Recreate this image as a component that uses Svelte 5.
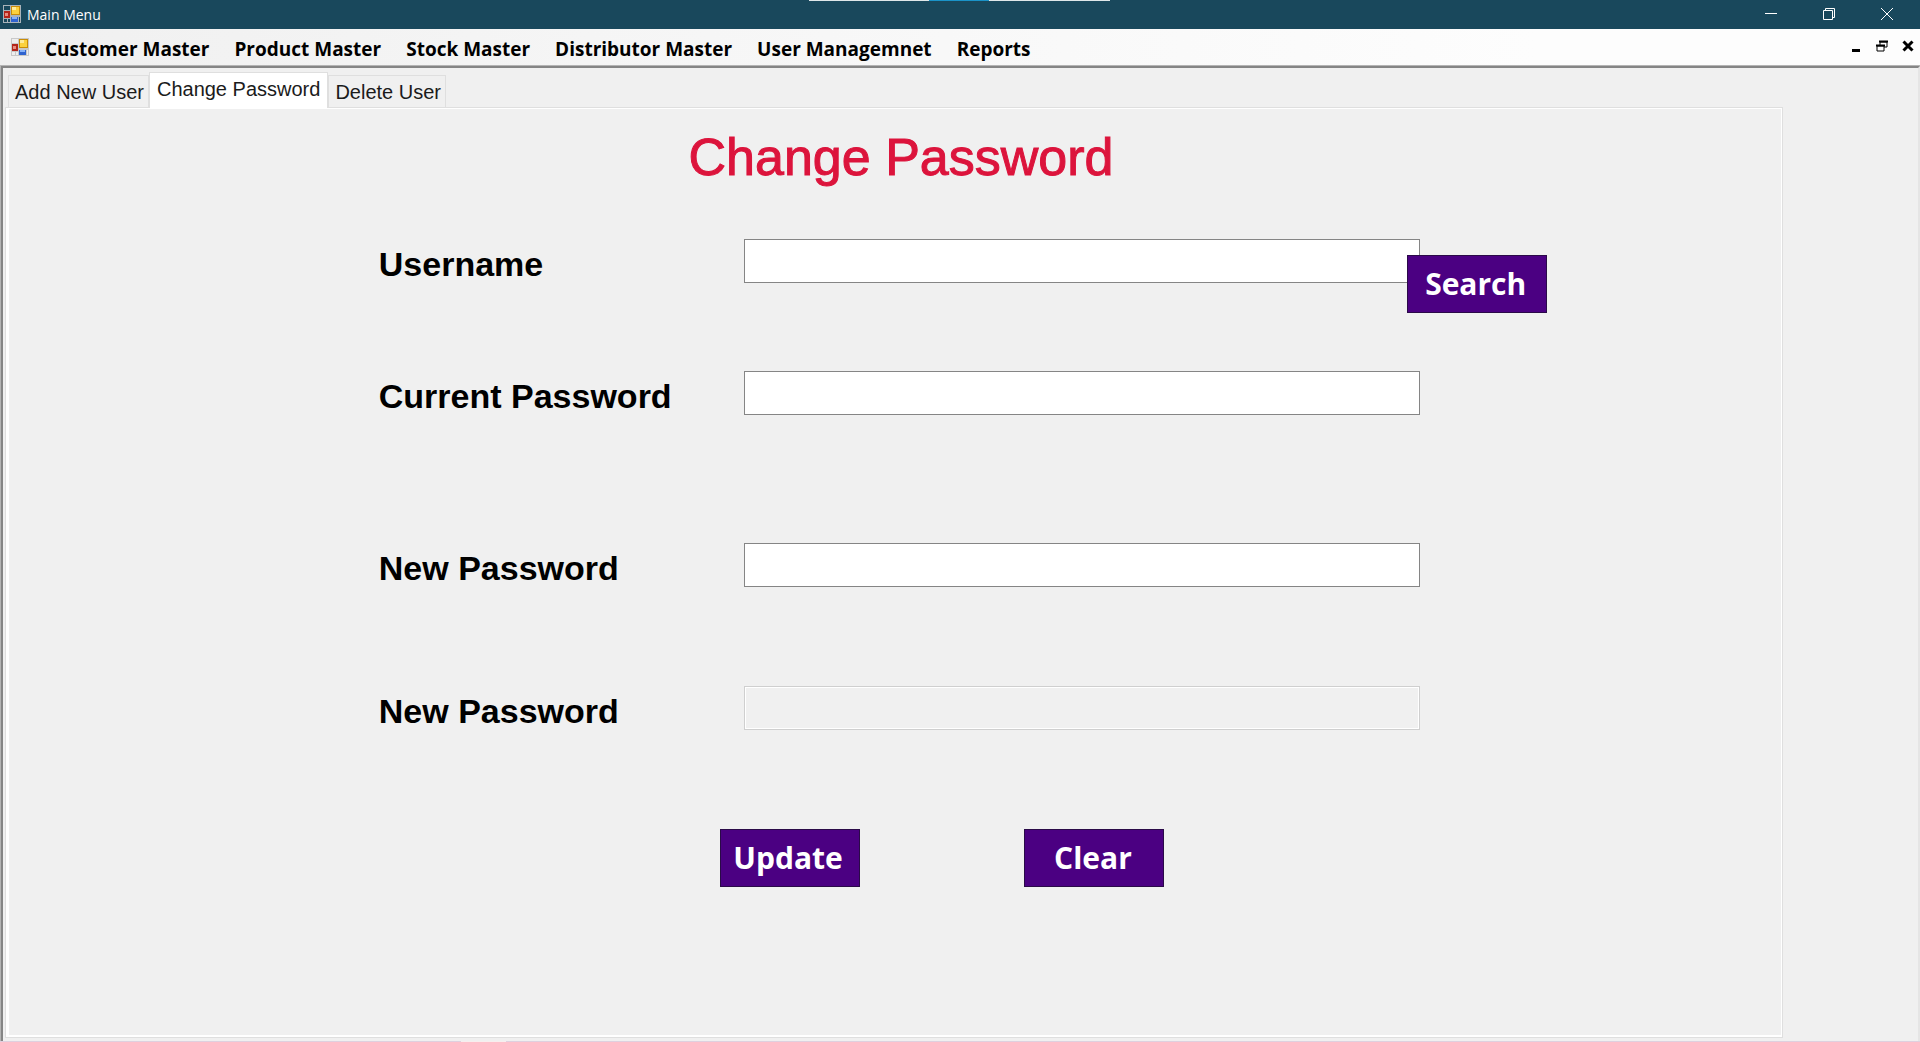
<script>
  const menus = ['Customer Master', 'Product Master', 'Stock Master', 'Distributor Master', 'User Managemnet', 'Reports'];
  const tabs = ['Add New User', 'Change Password', 'Delete User'];
  let active = $state('Change Password');
</script>

{#snippet appIcon()}
  <svg class="app-icon" viewBox="0 0 18 18" width="18" height="18" aria-hidden="true">
    <rect class="grid" x="0" y="0" width="18" height="18" />
    <rect class="cell" x="1" y="1" width="6" height="4" />
    <rect class="cell" x="1" y="14" width="3" height="3" />
    <rect class="cell" x="5" y="14" width="2" height="3" />
    <rect class="cell" x="16" y="12" width="1" height="5" />
    <rect x="1" y="6" width="6" height="7" fill="#b3261b" />
    <rect x="2" y="8" width="3" height="3" fill="#e88d80" />
    <rect x="8" y="1" width="9" height="9" fill="#c98d07" />
    <rect x="9" y="2" width="7" height="7" fill="#fbd13d" />
    <rect x="9" y="2" width="4" height="3" fill="#fdeb9a" />
    <rect x="8" y="12" width="7" height="5" fill="#2f63cf" />
    <rect x="9" y="12" width="5" height="2" fill="#86b2f8" />
  </svg>
{/snippet}

<div class="window">
  <header class="titlebar">
    {@render appIcon()}
    <span class="caption">Main Menu</span>
    <div class="handle" aria-hidden="true"><i></i></div>
    <div class="window-controls">
      <button aria-label="Minimize"><svg width="12" height="12" viewBox="0 0 12 12"><path d="M0 5.5H12" /></svg></button>
      <button aria-label="Restore"><svg width="12" height="12" viewBox="0 0 12 12"><path d="M.5 2.500H9.500V11.500H.5ZM2.500 2.500V.5H11.500V9.500H9.500" /></svg></button>
      <button aria-label="Close"><svg width="12" height="12" viewBox="0 0 12 12"><path d="M0 0L12 12M12 0L0 12" /></svg></button>
    </div>
  </header>

  <nav class="menubar">
    {@render appIcon()}
    <div class="menus">
      {#each menus as menu}
        <button class="menu">{menu}</button>
      {/each}
    </div>
    <div class="child-controls">
      <button aria-label="Minimize child"><svg width="12" height="12" viewBox="0 0 12 12"><path d="M2 10.500H10" stroke-width="3" /></svg></button>
      <button aria-label="Restore child"><svg width="12" height="12" viewBox="0 0 12 12"><path d="M1 6H8V11H1ZM4 5V2H11V7H8" stroke-width="1" /><path d="M3 1.500H12M0 5.500H9" stroke-width="2" /></svg></button>
      <button aria-label="Close child"><svg width="12" height="12" viewBox="0 0 12 12"><path d="M1.500 1.500L10.500 10.500M10.500 1.500L1.500 10.500" stroke-width="3" /></svg></button>
    </div>
  </nav>

  <main class="client">
    <div class="tabs" role="tablist">
      {#each tabs as tab}
        <button role="tab" class="tab" class:active={active === tab} aria-selected={active === tab} onclick={() => (active = tab)}>{tab}</button>
      {/each}
    </div>
    <section class="page">
      <h1>Change Password</h1>
      <form onsubmit={(e) => e.preventDefault()}>
        <div class="row">
          <label for="username">Username</label>
          <div class="field">
            <input id="username" type="text" />
            <button type="button" class="action search">Search</button>
          </div>
        </div>
        <div class="row current">
          <label for="current">Current Password</label>
          <div class="field"><input id="current" type="password" /></div>
        </div>
        <div class="row new">
          <label for="new">New Password</label>
          <div class="field"><input id="new" type="password" /></div>
        </div>
        <div class="row confirm">
          <label for="confirm">New Password</label>
          <div class="field"><input id="confirm" type="password" disabled /></div>
        </div>
        <div class="actions">
          <button type="submit" class="action">Update</button>
          <button type="reset" class="action clear">Clear</button>
        </div>
      </form>
    </section>
  </main>
  <div class="desktop-edge" aria-hidden="true"><i></i></div>
</div>

<style>
  :global(body) { margin: 0; background: #f0f0f0; }
  .window {
    display: flex;
    flex-direction: column;
    min-height: 100vh;
    background: #b4b4b4;
    font-family: "Liberation Sans", Arial, sans-serif;
    color: #000;
  }
  button { font: inherit; color: inherit; border: 0; padding: 0; background: none; }
  svg { display: block; flex: none; }

  .titlebar {
    position: relative;
    display: flex;
    align-items: center;
    box-sizing: border-box;
    height: 29px;
    padding: 0 4px 1px 3px;
    background: #19485c;
    color: #fff;
  }
  .titlebar .cell { fill: #19485c; }
  .grid { fill: #a9b3ba; }
  .menubar .grid { fill: #c8c8c8; }
  .caption { margin-left: 6px; padding-top: 2px; font: 14px/20px "Open Sans", sans-serif; }
  .handle {
    position: absolute;
    top: 0;
    left: 42.14%;
    width: 301px;
    height: 1px;
    background: #dfe7e9;
  }
  .handle i { display: block; width: 60px; height: 1px; margin-left: 120px; background: #1a93c8; }
  .window-controls { display: flex; margin-left: auto; height: 100%; }
  .window-controls button { display: grid; place-items: center; width: 58px; }
  .window-controls path { fill: none; stroke: #fff; stroke-width: 1; }

  .menubar {
    display: flex;
    align-items: center;
    height: 36px;
    padding: 0 6px 0 11px;
    background: linear-gradient(90deg, #f0f0f0, #fdfdfd 80%);
    font: bold 19px/26px "Open Sans", sans-serif;
  }
  .menubar .cell { fill: #eee; }
  .menus { display: flex; gap: 25px; padding: 3px 0 0 16px; }
  .menu { white-space: nowrap; }
  .child-controls { display: flex; gap: 14px; margin: 0 0 2px auto; }
  .child-controls path { fill: none; stroke: #000; }

  .client {
    flex: 1;
    display: flex;
    flex-direction: column;
    margin: 1px 0 0 1px;
    padding: 5px 135px 3px 2px;
    border-top: 2px solid #858585;
    border-left: 2px solid #858585;
    border-right: 2px solid #e5e5e5;
    background: #f0f0f0;
  }
  .tabs { display: flex; align-items: flex-end; height: 34px; padding-left: 3px; }
  .tab {
    height: 32px;
    padding: 0 4px 0 6px;
    border: 1px solid #dfdfdf;
    border-bottom: 0;
    font-size: 20px;
    line-height: 24px;
    color: #1b1b1b;
    white-space: nowrap;
  }
  .tab.active {
    z-index: 1;
    height: 36px;
    margin-bottom: -1px;
    padding: 0 7px 4px;
    background: #fff;
  }
  .page {
    flex: 1;
    border: 1px solid #dfdfdf;
    box-shadow: inset 3px 0 #fff, inset 0 1px #fff, inset -1px -2px #fff;
  }
  h1 {
    margin: 0;
    padding: 18px 0 0 14px;
    font-size: 52px;
    line-height: 62px;
    font-weight: 400;
    color: #dc143c;
    text-align: center;
    -webkit-text-stroke: 1px #dc143c;
  }
  form { padding-top: 51px; }
  .row { display: grid; grid-template-columns: 373fr 365fr 677fr 362fr; margin-bottom: 88px; }
  .row.current { margin-bottom: 128px; }
  .row.new, .row.confirm { margin-bottom: 99px; }
  label {
    grid-column: 2;
    padding-top: 6px;
    font-size: 34px;
    line-height: 38px;
    font-weight: 700;
    white-space: nowrap;
  }
  .field { grid-column: 3; position: relative; }
  input {
    display: block;
    box-sizing: border-box;
    width: 100%;
    height: 44px;
    padding: 0 8px;
    border: 1px solid #858585;
    background: #fff;
    font: 28px "Liberation Sans", sans-serif;
    outline: 0;
  }
  input:disabled { border-color: #cfcfcf; background: #f0f0f0; box-shadow: inset 0 0 0 1px #fff; }
  .action {
    box-sizing: border-box;
    width: 140px;
    height: 58px;
    padding-right: 3px;
    border: 1px solid #2a0a48;
    background: #4b0082;
    color: #fff;
    font: bold 30px/40px "Open Sans", sans-serif;
  }
  .search { position: absolute; top: 16px; left: calc(100% - 13px); }
  .actions { display: grid; grid-template-columns: 714fr 305fr 758fr; }
  .actions .action { grid-column: 2; }
  .actions .clear { grid-column: 3; }
  .desktop-edge { height: 1px; background: #dfd0df; }
  .desktop-edge i { display: block; width: 45px; height: 1px; margin-left: 24%; background: #f7eeee; }
</style>
